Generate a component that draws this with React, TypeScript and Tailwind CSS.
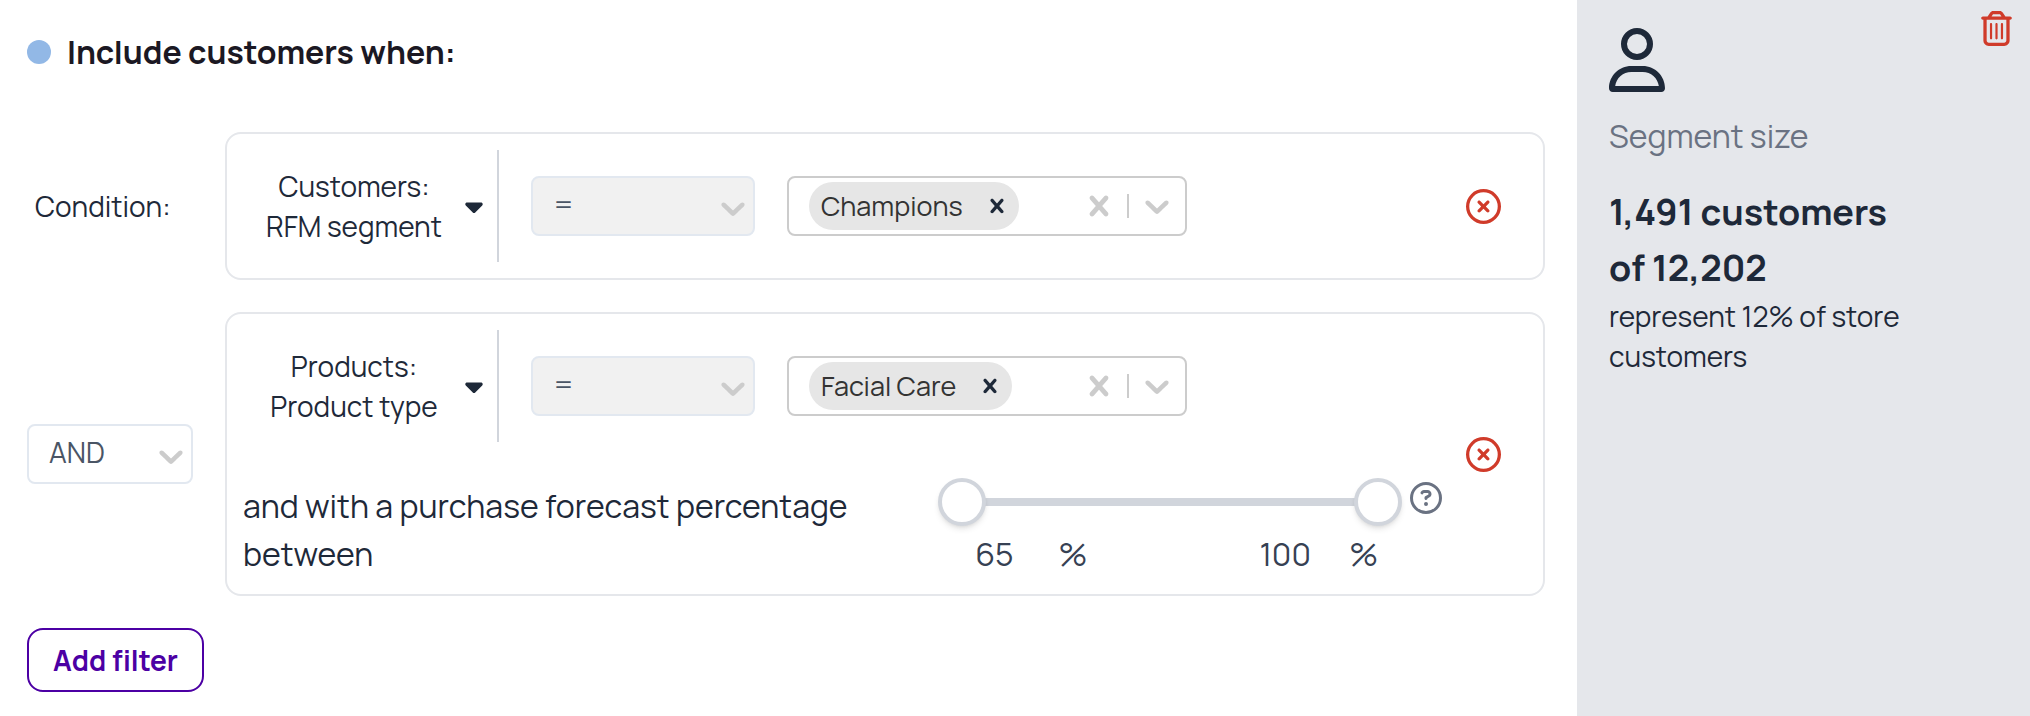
import { type ReactNode, useState } from "react";
import {
  FaCaretDown,
  FaRegCircleQuestion,
  FaRegCircleXmark,
  FaRegTrashCan,
  FaRegUser,
} from "react-icons/fa6";

const FORECAST_MIN = 65;
const FORECAST_MAX = 100;

export default function App() {
  return (
    <div className="flex min-h-screen bg-white font-['Manrope','Inter',sans-serif] text-gray-800">
      <main className="min-w-0 flex-1 pt-7 pr-8 pb-6 pl-[27px]">
        <h1 className="flex items-center gap-4 text-[32px] leading-[48px] font-bold text-[#1b1823]">
          <span className="size-6 rounded-full bg-[#92b8e6]" />
          Include customers when:
        </h1>

        <div className="mt-14 flex flex-col gap-8">
          <FilterRow lead={<span className="pl-2 text-[28px] leading-10">Condition:</span>}>
            <FilterFields group="Customers:" field="RFM segment" value="Champions" />
          </FilterRow>

          <FilterRow
            lead={
              <SelectBox label="Join operator" className="w-[166px]">
                <option>AND</option>
                <option>OR</option>
              </SelectBox>
            }
          >
            <FilterFields group="Products:" field="Product type" value="Facial Care" />
            <div className="mt-9 flex items-end pl-4">
              <p className="flex-1 pr-16 text-[32px] leading-[48px]">
                and with a purchase forecast percentage between
              </p>
              <ForecastRange />
            </div>
          </FilterRow>
        </div>

        <button
          type="button"
          className="mt-8 h-16 rounded-2xl border-2 border-[#4c00a4] px-6 text-[28px] leading-10 font-bold text-[#4c00a4]"
        >
          Add filter
        </button>
      </main>

      <SegmentSize />
    </div>
  );
}

function FilterRow({ lead, children }: { lead: ReactNode; children: ReactNode }) {
  return (
    <div className="flex items-center">
      <div className="w-[198px] shrink-0">{lead}</div>
      <section className="flex min-w-0 flex-1 items-center rounded-2xl border-2 border-gray-200 py-4 pr-[42px]">
        <div className="min-w-0 flex-1">{children}</div>
        <button type="button" aria-label="Remove filter" className="ml-6 shrink-0 text-[#d03b2a]">
          <FaRegCircleXmark size={35} />
        </button>
      </section>
    </div>
  );
}

function FilterFields({ group, field, value }: { group: string; field: string; value: string }) {
  return (
    <div className="flex items-center gap-8">
      <button
        type="button"
        className="flex h-28 w-[272px] shrink-0 items-center border-r-2 border-gray-300 pr-3.5 pl-4 text-[28px] leading-10"
      >
        <span className="flex-1 text-center">
          <span className="block">{group}</span>
          <span className="block">{field}</span>
        </span>
        <FaCaretDown size={28} className="-mx-[5px]" />
      </button>

      <SelectBox label={`${field} comparison`} className="w-56" disabled>
        <option>=</option>
      </SelectBox>

      <TagSelect label={`${field} values`} initial={value} />
    </div>
  );
}

interface SelectBoxProps {
  label: string;
  className: string;
  disabled?: boolean;
  children: ReactNode;
}

function SelectBox({ label, className, disabled, children }: SelectBoxProps) {
  return (
    <div className={`relative shrink-0 ${className}`}>
      <select
        aria-label={label}
        disabled={disabled}
        className="block h-[60px] w-full appearance-none rounded-lg border-2 border-[#e2e8f0] bg-white pb-1 pl-5 text-[28px] text-gray-600 opacity-100 disabled:bg-[#f1f1f1]"
      >
        {children}
      </select>
      <span className="pointer-events-none absolute inset-y-0 right-0.5 flex items-center pt-1 text-[#cccccc]">
        <ChevronIcon />
      </span>
    </div>
  );
}

function TagSelect({ label, initial }: { label: string; initial: string }) {
  const [tags, setTags] = useState([initial]);

  return (
    <div className="flex h-[60px] w-[400px] items-center rounded-lg border-2 border-[#cccccc] pr-2 pl-5 text-[#cccccc]">
      {tags.map((tag) => (
        <span
          key={tag}
          className="flex h-12 shrink-0 items-center rounded-full bg-[#e6e6e6] pr-2 pl-3 text-[27px] text-[#333333]"
        >
          {tag}
          <button
            type="button"
            aria-label={`Remove ${tag}`}
            className="ml-5 text-gray-800"
            onClick={() => setTags(tags.filter((t) => t !== tag))}
          >
            <CrossIcon className="size-7" />
          </button>
        </span>
      ))}
      <input aria-label={label} className="w-0 min-w-0 flex-1 text-[27px] text-gray-800 outline-none" />
      <button type="button" aria-label="Clear all" onClick={() => setTags([])}>
        <CrossIcon className="size-10" />
      </button>
      <span className="mx-2 h-6 w-0.5 bg-[#cccccc]" />
      <button type="button" aria-label="Show options">
        <ChevronIcon />
      </button>
    </div>
  );
}

function ForecastRange() {
  const [low, setLow] = useState(FORECAST_MIN);
  const [high, setHigh] = useState(FORECAST_MAX);

  return (
    <div className="flex w-[42%] shrink-0 items-start gap-2">
      <div className="flex-1">
        <div className="relative flex h-12 items-center">
          <div className="mx-6 h-2 flex-1 bg-gray-300" />
          <RangeHandle label="Lowest forecast percentage" value={low} onChange={(v) => setLow(Math.min(v, high))} />
          <RangeHandle label="Highest forecast percentage" value={high} onChange={(v) => setHigh(Math.max(v, low))} />
        </div>
        <div className="mt-1 flex justify-between pr-6 pl-4 text-[32px] leading-[48px] text-gray-700">
          <PercentField label="From" value={low} onChange={setLow} />
          <PercentField label="To" value={high} onChange={setHigh} />
        </div>
      </div>
      <button type="button" aria-label="About forecast percentage" className="mt-1 text-gray-500">
        <FaRegCircleQuestion size={32} />
      </button>
    </div>
  );
}

interface NumberControlProps {
  label: string;
  value: number;
  onChange: (value: number) => void;
}

function RangeHandle({ label, value, onChange }: NumberControlProps) {
  return (
    <input
      type="range"
      aria-label={label}
      min={FORECAST_MIN}
      max={FORECAST_MAX}
      value={value}
      onChange={(e) => onChange(Number(e.target.value))}
      className="pointer-events-none absolute inset-0 h-12 w-full appearance-none bg-transparent [&::-webkit-slider-thumb]:pointer-events-auto [&::-webkit-slider-thumb]:size-12 [&::-webkit-slider-thumb]:appearance-none [&::-webkit-slider-thumb]:rounded-full [&::-webkit-slider-thumb]:border-4 [&::-webkit-slider-thumb]:border-gray-300 [&::-webkit-slider-thumb]:bg-white [&::-webkit-slider-thumb]:shadow-md"
    />
  );
}

function PercentField({ label, value, onChange }: NumberControlProps) {
  return (
    <label className="flex items-center gap-6">
      <input
        type="text"
        inputMode="numeric"
        aria-label={label}
        value={value}
        onChange={(e) => onChange(Number(e.target.value) || 0)}
        className="h-12 w-20 text-center outline-none"
      />
      %
    </label>
  );
}

function SegmentSize() {
  return (
    <aside className="flex w-[453px] shrink-0 items-start justify-between bg-gray-200 pl-8">
      <div className="pt-7">
        <FaRegUser className="h-16 w-14" />
        <p className="mt-5 text-[32px] leading-[48px] text-gray-500">Segment size</p>
        <p className="mt-6 text-[36px] leading-[56px] font-bold">
          1,491 customers
          <br />
          of 12,202
        </p>
        <p className="max-w-[320px] text-[28px] leading-10">represent 12% of store customers</p>
      </div>
      <button type="button" aria-label="Delete segment" className="pt-[11px] pr-4 text-[#d03b2a]">
        <FaRegTrashCan size={35} />
      </button>
    </aside>
  );
}

function ChevronIcon() {
  return (
    <svg viewBox="0 0 20 20" fill="currentColor" className="size-10" aria-hidden="true">
      <path d="M4.516 7.548c0.436-0.446 1.043-0.481 1.576 0l3.908 3.747 3.908-3.747c0.533-0.481 1.141-0.446 1.574 0 0.436 0.445 0.408 1.197 0 1.615-0.406 0.418-4.695 4.502-4.695 4.502-0.217 0.223-0.502 0.335-0.787 0.335s-0.57-0.112-0.789-0.335c0 0-4.287-4.084-4.695-4.502s-0.436-1.17 0-1.615z" />
    </svg>
  );
}

function CrossIcon({ className }: { className: string }) {
  return (
    <svg viewBox="0 0 20 20" fill="currentColor" className={className} aria-hidden="true">
      <path d="M14.348 14.849c-0.469 0.469-1.229 0.469-1.697 0l-2.651-3.030-2.651 3.029c-0.469 0.469-1.229 0.469-1.697 0-0.469-0.469-0.469-1.229 0-1.697l2.758-3.15-2.759-3.152c-0.469-0.469-0.469-1.228 0-1.697s1.228-0.469 1.697 0l2.652 3.031 2.651-3.031c0.469-0.469 1.228-0.469 1.697 0s0.469 1.229 0 1.697l-2.758 3.152 2.758 3.15c0.469 0.469 0.469 1.229 0 1.698z" />
    </svg>
  );
}
